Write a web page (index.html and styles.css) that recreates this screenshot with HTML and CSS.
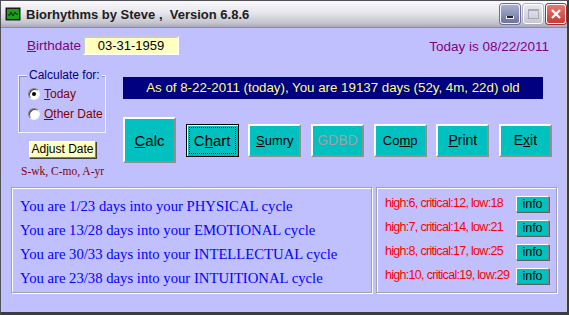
FILE: index.html
```html
<!DOCTYPE html>
<html>

<head>
    <meta charset="utf-8" />
    <title>Biorhythms by Steve</title>
    <link rel="stylesheet" href="styles.css">
</head>

<body>
    <div class="window">
        <div class="titlebar">
            <span class="appIcon">
                <svg width="16" height="14" viewBox="0 0 16 14">
                    <rect x="0.5" y="0.5" width="15" height="13" fill="#1a1a1a" />
                    <rect x="2" y="2" width="12" height="10" fill="#18a018" />
                    <path d="M3 8 L5 8 L6 5 L8 9 L10 5 L11 7 L13 7" stroke="#003000" stroke-width="1" fill="none" />
                </svg>
            </span>
            <span class="title">Biorhythms by Steve ,&nbsp; Version 6.8.6</span>
            <div class="winBtns">
                <span class="wb minBtn"><i></i></span>
                <span class="wb maxBtn"><i></i></span>
                <span class="wb closeBtn">
                    <svg width="12" height="12" viewBox="0 0 12 12">
                        <path d="M2 2 L10 10 M10 2 L2 10" stroke="#fff" stroke-width="2.2" />
                    </svg>
                </span>
            </div>
        </div>

        <div class="client">
            <div class="topRow">
                <span class="bdLabel"><u>B</u>irthdate</span>
                <span class="bdInput">03-31-1959</span>
                <span class="today">Today is 08/22/2011</span>
            </div>

            <div class="midRow">
                <div class="leftCol">
                    <div class="groupBox">
                        <span class="legend">Calculate for:</span>
                        <div class="radioRow"><span class="radio on"></span><span><u>T</u>oday</span></div>
                        <div class="radioRow"><span class="radio"></span><span><u>O</u>ther Date</span></div>
                    </div>
                    <div class="adjustBtn">Adjust Date</div>
                    <div class="hint">S-wk, C-mo, A-yr</div>
                </div>
                <div class="rightCol">
                    <div class="ageBar">As of 8-22-2011 (today), You are 19137 days (52y, 4m, 22d) old</div>
                    <div class="btnRow">
                        <div class="btn big"><u>C</u>alc</div>
                        <div class="btn focused"><span class="focusRect">C<u>h</u>art</span></div>
                        <div class="btn small"><u>S</u>umry</div>
                        <div class="btn disabled">GDBD</div>
                        <div class="btn small">Co<u>m</u>p</div>
                        <div class="btn"><u>P</u>rint</div>
                        <div class="btn">E<u>x</u>it</div>
                    </div>
                </div>
            </div>

            <div class="bottomRow">
                <div class="panel cycles">
                    <p>You are 1/23 days into your PHYSICAL cycle</p>
                    <p>You are 13/28 days into your EMOTIONAL cycle</p>
                    <p>You are 30/33 days into your INTELLECTUAL cycle</p>
                    <p>You are 23/38 days into your INTUITIONAL cycle</p>
                </div>
                <div class="panel days">
                    <div class="dayRow"><span>high:6, critical:12, low:18</span><span class="infoBtn">info</span></div>
                    <div class="dayRow"><span>high:7, critical:14, low:21</span><span class="infoBtn">info</span></div>
                    <div class="dayRow"><span>high:8, critical:17, low:25</span><span class="infoBtn">info</span></div>
                    <div class="dayRow"><span>high:10, critical:19, low:29</span><span class="infoBtn">info</span></div>
                </div>
            </div>
        </div>
    </div>
</body>

</html>
```

FILE: styles.css
```css
* {
    box-sizing: border-box;
}

body,
p,
div {
    margin: 0px;
    padding: 0px;
}

body {
    font-family: "Liberation Sans", Arial, sans-serif;
    background-color: #404048;
}

.window {
    width: 569px;
    height: 315px;
    display: flex;
    flex-direction: column;
    background-color: #c8c8d0;
    border: 1px solid #505058;
    border-bottom: 3px solid #3c3c44;
    border-right: 2px solid #3c3c44;
}

/* title bar */
.titlebar {
    height: 27px;
    display: flex;
    align-items: center;
    padding-left: 4px;
    background: linear-gradient(to bottom, #fafafc 0%, #e6e6ec 45%, #c4c4d0 85%, #a8a8b8 100%);
    border-bottom: 1px solid #8c8c9c;
}

.appIcon {
    width: 16px;
    height: 14px;
    display: flex;
    margin-right: 5px;
}

.title {
    font-family: "Liberation Sans", Arial, sans-serif;
    font-weight: bold;
    font-size: 13px;
    color: #202020;
    flex: 1;
}

.winBtns {
    display: flex;
    gap: 3px;
    margin-right: 1px;
}

.wb {
    width: 20px;
    height: 20px;
    border-radius: 3px;
    border: 1px solid #ffffff;
    display: flex;
    align-items: center;
    justify-content: center;
}

.minBtn {
    background: linear-gradient(to bottom, #a8b0d0, #6c74a0);
    border-color: #f0f0ff;
    box-shadow: 0 0 0 1px #6c7090;
}

.minBtn i {
    display: block;
    width: 8px;
    height: 3px;
    margin-top: 7px;
    background-color: #202040;
    border: 1px solid #f0f0ff;
    border-top: none;
}

.maxBtn {
    background: linear-gradient(to bottom, #e8e8f0, #c8c8d4);
    box-shadow: 0 0 0 1px #b0b0c0;
}

.maxBtn i {
    display: block;
    width: 11px;
    height: 10px;
    border: 1px solid #a8a8b8;
    border-top-width: 2px;
}

.closeBtn {
    background: linear-gradient(to bottom, #e87870, #c83c34);
    box-shadow: 0 0 0 1px #a03030;
}

/* client area */
.client {
    flex: 1;
    background-color: #c0c0ff;
    margin: 0 1px 1px 1px;
    display: flex;
    flex-direction: column;
    padding-top: 8px;
}

.topRow {
    display: flex;
    align-items: center;
    height: 19px;
    padding-left: 25px;
    font-size: 13.5px;
    color: #800080;
}

.bdLabel {
    width: 56px;
}

.bdInput {
    width: 96px;
    height: 19px;
    background-color: #ffffc0;
    color: #000;
    font-size: 13px;
    text-align: center;
    line-height: 15px;
    border: 2px solid;
    border-color: #c8c8d0 #ffffff #ffffff #c8c8d0;
}

.today {
    margin-left: auto;
    margin-right: 17px;
    font-size: 13.5px;
    margin-top: 2px;
}

.midRow {
    display: flex;
    height: 112px;
    margin-top: 20px;
}

.leftCol {
    width: 121px;
    padding-left: 16px;
}

.groupBox {
    position: relative;
    width: 88px;
    height: 58px;
    border: 1px solid #f0f0ff;
    box-shadow: inset 1px 1px 0 #9090b0;
    padding: 8px 0 0 9px;
    font-size: 12px;
    color: #800000;
}

.legend {
    position: absolute;
    top: -8px;
    left: 8px;
    padding: 0 2px;
    background-color: #c0c0ff;
    color: #000080;
    font-size: 12px;
}

.radioRow {
    display: flex;
    align-items: center;
    height: 20px;
    gap: 4px;
}

.radio {
    width: 12px;
    height: 12px;
    border-radius: 50%;
    background-color: #ffffff;
    border: 1px solid;
    border-color: #808080 #f0f0f0 #f0f0f0 #808080;
    box-shadow: inset 1px 1px 0 #404040;
    display: flex;
    align-items: center;
    justify-content: center;
}

.radio.on::after {
    content: "";
    width: 4px;
    height: 4px;
    border-radius: 50%;
    background-color: #000;
}

.adjustBtn {
    width: 67px;
    height: 17px;
    margin: 8px 0 0 11px;
    background-color: #ffffc0;
    border: 1px solid;
    border-color: #ffffff #808080 #808080 #ffffff;
    box-shadow: 1px 1px 0 #404040;
    font-size: 12px;
    line-height: 15px;
    text-align: center;
}

.hint {
    margin: 7px 0 0 3px;
    font-family: "Liberation Serif", "Times New Roman", serif;
    font-size: 11.5px;
    color: #800000;
}

.rightCol {
    width: 429px;
    padding-top: 2px;
}

.ageBar {
    width: 420px;
    height: 22px;
    background-color: #000080;
    color: #ffff80;
    font-size: 13.3px;
    line-height: 22px;
    text-align: center;
}

.btnRow {
    display: flex;
    justify-content: space-between;
    align-items: center;
    margin-top: 18px;
    height: 46px;
}

.btn {
    width: 53px;
    height: 33px;
    background-color: #00c0c0;
    border: 2px solid;
    border-color: #ffffff #909090 #909090 #ffffff;
    display: flex;
    align-items: center;
    justify-content: center;
    font-size: 14px;
    color: #000;
}

.btn.small {
    font-size: 13px;
}

.btn.big {
    height: 46px;
    font-size: 15px;
}

.btn.disabled {
    color: #a0a0a8;
}

.btn.focused {
    border: 1px solid #000;
    box-shadow: inset 1px 1px 0 #ffffff, inset -1px -1px 0 #808080;
    padding: 2px;
}

.focusRect {
    width: 100%;
    height: 100%;
    border: 1px dotted #000;
    display: flex;
    align-items: center;
    justify-content: center;
    font-size: 15px;
}

.bottomRow {
    display: flex;
    gap: 4px;
    padding-left: 9px;
}

.panel {
    height: 106px;
    border: 1px solid #a0a0b0;
    box-shadow: inset 1px 1px 0 #ffffff, 1px 1px 0 #ffffff;
}

.cycles {
    width: 361px;
    padding: 6px 0 0 8px;
    font-family: "Liberation Serif", "Times New Roman", serif;
    font-size: 14.7px;
    color: #0000ff;
}

.cycles p {
    line-height: 24px;
}

.days {
    width: 181px;
    padding: 4px 7px 0 8px;
    font-size: 12.5px;
    color: #ff0000;
}

.dayRow {
    display: flex;
    justify-content: space-between;
    align-items: center;
    height: 24px;
}

.dayRow span:first-child {
    margin-top: -3px;
    letter-spacing: -0.7px;
}

.infoBtn {
    width: 33px;
    height: 16px;
    background-color: #00c0c0;
    border: 1px solid;
    border-color: #ffffff #808080 #808080 #ffffff;
    box-shadow: 1px 1px 0 #606060;
    color: #000;
    font-size: 12.5px;
    line-height: 14px;
    text-align: center;
}
```
